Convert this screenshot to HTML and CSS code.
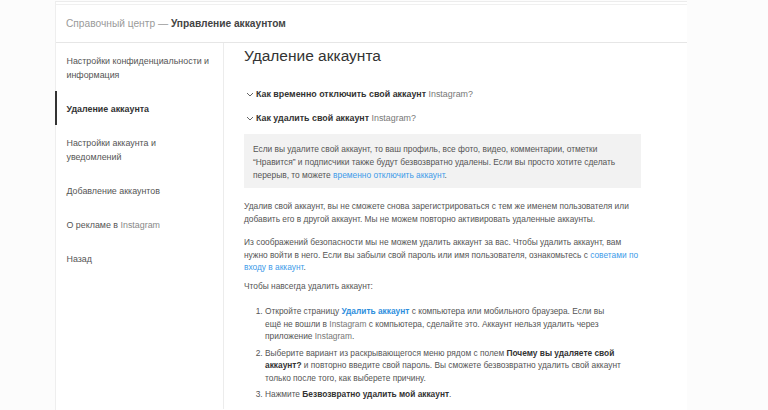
FILE: index.html
```html
<!DOCTYPE html>
<html>

<head>
    <title>Удаление аккаунта</title>
    <link rel="stylesheet" href="styles.css">
</head>

<body>

    <div class="page">
        <div class="topbar">
            <span class="crumb">Справочный центр — </span><b>Управление аккаунтом</b>
        </div>

        <div class="main">
            <div class="sidebar">
                <a class="nav-item">Настройки конфиденциальности и информация</a>
                <a class="nav-item active">Удаление аккаунта</a>
                <a class="nav-item">Настройки аккаунта и уведомлений</a>
                <a class="nav-item">Добавление аккаунтов</a>
                <a class="nav-item">О рекламе в <span class="brand">Instagram</span></a>
                <a class="nav-item">Назад</a>
            </div>

            <div class="content">
                <h1>Удаление аккаунта</h1>

                <div class="question first">
                    <svg class="chevron" width="8" height="5" viewBox="0 0 8 5"><path d="M1 1l3 3 3-3" fill="none" stroke="#666" stroke-width="1"/></svg>
                    <span>Как временно отключить свой аккаунт <span class="brand">Instagram?</span></span>
                </div>
                <div class="question">
                    <svg class="chevron" width="8" height="5" viewBox="0 0 8 5"><path d="M1 1l3 3 3-3" fill="none" stroke="#666" stroke-width="1"/></svg>
                    <span>Как удалить свой аккаунт <span class="brand">Instagram?</span></span>
                </div>

                <div class="note">
                    Если вы удалите свой аккаунт, то ваш профиль, все фото, видео, комментарии, отметки
                    “Нравится” и подписчики также будут безвозвратно удалены. Если вы просто хотите сделать
                    перерыв, то можете <a class="link">временно отключить аккаунт</a>.
                </div>

                <p>Удалив свой аккаунт, вы не сможете снова зарегистрироваться с тем же именем пользователя или
                    добавить его в другой аккаунт. Мы не можем повторно активировать удаленные аккаунты.</p>

                <p>Из соображений безопасности мы не можем удалить аккаунт за вас. Чтобы удалить аккаунт, вам
                    нужно войти в него. Если вы забыли свой пароль или имя пользователя, ознакомьтесь с
                    <a class="link">советами по входу в аккаунт</a>.</p>

                <p class="lead">Чтобы навсегда удалить аккаунт:</p>

                <ol class="steps">
                    <li>Откройте страницу <a class="link strong">Удалить аккаунт</a> с компьютера или мобильного браузера. Если вы<br>
                        ещё не вошли в <span class="brand">Instagram</span> с компьютера, сделайте это. Аккаунт нельзя удалить через<br>
                        приложение <span class="brand">Instagram</span>.</li>
                    <li>Выберите вариант из раскрывающегося меню рядом с полем <b>Почему вы удаляете свой
                        аккаунт?</b> и повторно введите свой пароль. Вы сможете безвозвратно удалить свой аккаунт
                        только после того, как выберете причину.</li>
                    <li>Нажмите <b>Безвозвратно удалить мой аккаунт</b>.</li>
                </ol>
            </div>
        </div>
    </div>

</body>

</html>
```

FILE: styles.css
```css
body {
    margin: 0;
    background-color: #fcfcfc;
    font-family: "Liberation Sans", Arial, sans-serif;
    color: #555;
    overflow: hidden;
}

.page {
    margin-left: 55px;
    width: 631px;
    height: 410px;
    margin-top: 1px;
    background-color: #fff;
    border-top: 1px solid #ececec;
    border-left: 1px solid #eeeeee;
}

.topbar {
    margin-top: 2px;
    border-top: 1px solid #f0f0f0;
    height: 37px;
    line-height: 38px;
    padding-left: 10px;
    font-size: 10.2px;
    color: #444;
    border-bottom: 1px solid #e6e6e6;
}

.topbar .crumb {
    color: #9a9a9a;
}

.main {
    display: flex;
    height: 366px;
}

.sidebar {
    width: 167px;
    border-right: 1px solid #ececec;
    display: flex;
    flex-direction: column;
}

.nav-item {
    display: block;
    padding: 10.5px 10.5px 9.5px 9.5px;
    font-size: 8.9px;
    line-height: 14px;
    color: #555;
    border-left: 2px solid transparent;
    margin-left: -1px;
}

.nav-item.active {
    border-left-color: #333;
    font-weight: bold;
    color: #333;
}

.nav-item .brand {
    color: #888;
}

.content {
    padding: 3px 0 0 20px;
    width: 397px;
}

h1 {
    margin: 0;
    font-size: 15.5px;
    font-weight: normal;
    line-height: 20px;
    color: #333;
}

.question {
    display: flex;
    align-items: center;
    gap: 2px;
    height: 24px;
    font-size: 8.9px;
    font-weight: bold;
    color: #333;
}

.question.first {
    margin-top: 16px;
}

.chevron {
    margin-left: 2px;
    flex: none;
}

.brand {
    font-weight: normal;
    color: #777;
}

.note {
    margin-top: 4px;
    background-color: #f2f2f2;
    padding: 9px 9px 7px 9px;
    font-size: 8.4px;
    line-height: 12.75px;
}

.link {
    color: #3d9be9;
}

.link.strong {
    font-weight: bold;
    color: #2e8fdd;
}

p {
    margin: 12px 0 0 0;
    font-size: 8.35px;
    line-height: 12.75px;
}

p + p {
    margin-top: 10px;
}

p.lead {
    margin-top: 6px;
}

.steps {
    margin: 12px 0 0 0;
    padding-left: 21px;
    font-size: 8.35px;
    line-height: 12.75px;
}

.steps li {
    margin-bottom: 3.5px;
}

.steps b {
    color: #333;
}
```
